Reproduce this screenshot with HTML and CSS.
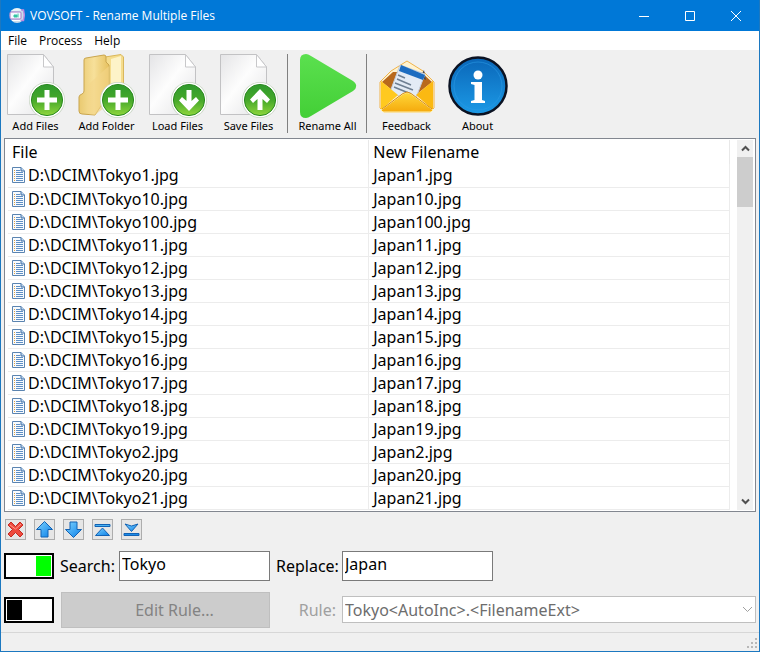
FILE: index.html
```html
<!DOCTYPE html>
<html lang="en">
<head>
  <meta charset="UTF-8" />
  <meta name="viewport" content="width=device-width, initial-scale=1.0" />
  <title>VOVSOFT - Rename Multiple Files</title>
  <link rel="stylesheet" href="styles.css">
</head>
<body>

  <!-- shared gradients and symbols -->
  <svg class="defs" width="0" height="0" aria-hidden="true">
    <defs>
      <linearGradient id="paper" x1="0" y1="0" x2="1" y2="1">
        <stop offset="0" stop-color="#e4e4e6" /><stop offset=".45" stop-color="#fdfdfd" /><stop offset="1" stop-color="#e2e2e4" />
      </linearGradient>
      <linearGradient id="green" x1="0" y1="0" x2="0" y2="1">
        <stop offset="0" stop-color="#2f9a2c" /><stop offset=".5" stop-color="#45a82a" /><stop offset="1" stop-color="#8fd63c" />
      </linearGradient>
      <linearGradient id="folder" x1="0" y1="0" x2="1" y2="0">
        <stop offset="0" stop-color="#e9c970" /><stop offset=".5" stop-color="#f7e09a" /><stop offset="1" stop-color="#e6c15f" />
      </linearGradient>
      <linearGradient id="play" x1="0" y1="0" x2="0" y2="1">
        <stop offset="0" stop-color="#5be04f" /><stop offset="1" stop-color="#43cf36" />
      </linearGradient>
      <linearGradient id="envelope" x1="0" y1="0" x2="0" y2="1">
        <stop offset="0" stop-color="#ffd83a" /><stop offset="1" stop-color="#f5a90c" />
      </linearGradient>
      <linearGradient id="info" x1="0" y1="0" x2="0" y2="1">
        <stop offset="0" stop-color="#0a66b8" /><stop offset="1" stop-color="#1c9ae6" />
      </linearGradient>
      <linearGradient id="arrow" x1="0" y1="0" x2="1" y2="1">
        <stop offset="0" stop-color="#7fd4ff" /><stop offset="1" stop-color="#0a7fe8" />
      </linearGradient>
      <symbol id="page" viewBox="0 0 63 65">
        <path d="M3.500.5H39.500L49.500 13V60.500H3.500Z" fill="url(#paper)" stroke="#c2c2c4" />
        <path d="M39.500.5V13H49.500Z" fill="#fff" stroke="#c8c8ca" />
      </symbol>
      <symbol id="badge" viewBox="0 0 63 65">
        <circle cx="43" cy="46" r="18" fill="#c9d6c4" />
        <circle cx="43" cy="46" r="17.300" fill="#fff" />
        <circle cx="43" cy="46" r="15.600" fill="url(#green)" stroke="#2c8a22" />
      </symbol>
      <symbol id="doc" viewBox="0 0 13 16">
        <path d="M.5.5H9L12.500 4V15.500H.5Z" fill="#f7fbff" stroke="#5b84b0" />
        <path d="M9 .5V4H12.500" fill="#bcd6f0" stroke="#3f6da3" />
        <path d="M4 3.500H8M4 5.500H11M4 7.500H11M4 9.500H11M4 11.500H11M4 13.500H11" stroke="#5f8fc4" />
        <path d="M2 3.500H3M2 5.500H3M2 7.500H3M2 9.500H3M2 11.500H3M2 13.500H3" stroke="#e0a040" />
      </symbol>
    </defs>
  </svg>

  <div class="window">
    <header class="titlebar">
      <svg class="app-icon" width="17" height="17" viewBox="0 0 17 17" aria-hidden="true">
        <circle cx="8" cy="8.500" r="7.500" fill="#c9dcea" />
        <path d="M2 4Q8-1 13 3.500" fill="#e9f6fa" />
        <rect x="1" y="5" width="11" height="7" rx="1" fill="#f4fbff" stroke="#a777c4" />
        <path d="M5 10V8H8V10Z M9 6.500V10.500" fill="#35c4a4" stroke="#35c4a4" />
        <path d="M12 3H14.500Q16 8 14.500 13.500H12" fill="none" stroke="#c08ae0" stroke-width="1.500" />
        <path d="M3 13.500H11" stroke="#fff" />
      </svg>
      <h1>VOVSOFT - Rename Multiple Files</h1>
      <div class="window-buttons">
        <button type="button" aria-label="Minimize"><svg width="12" height="12" viewBox="0 0 12 12"><path d="M1 6.500H11" /></svg></button>
        <button type="button" aria-label="Maximize"><svg width="12" height="12" viewBox="0 0 12 12"><path d="M1.500 1.500H10.500V10.500H1.500Z" /></svg></button>
        <button type="button" aria-label="Close"><svg width="12" height="12" viewBox="0 0 12 12"><path d="M1 1L11 11M11 1L1 11" /></svg></button>
      </div>
    </header>

    <nav class="menu">
      <a href="#file">File</a>
      <a href="#process">Process</a>
      <a href="#help">Help</a>
    </nav>

    <div class="toolbar">
      <button type="button" class="tool">
        <svg width="63" height="65" viewBox="0 0 63 65"><use href="#page" /><use href="#badge" /><path d="M40.500 36H45.500V43.500H53V48.500H45.500V56H40.500V48.500H33V43.500H40.500Z" fill="#fff" /></svg>
        <span>Add Files</span>
      </button>
      <button type="button" class="tool">
        <svg width="63" height="65" viewBox="0 0 63 65">
          <path d="M30 3L46 .5L48.500 3V44L32 57Z" fill="#f5dc8c" stroke="#d9b75c" />
          <path d="M36 5L46 2V42H36Z" fill="#fdf3c8" />
          <path d="M9 6Q9 4 11 4L29 1Q31 1 31 3V8L34 11V40L20 61L7 60Q4 60 4 57V43Q4 41 7 40Q9 39 9 37Z" fill="url(#folder)" stroke="#c9a54e" />
          <path d="M13 60V34Q13 30 16 28L34 12V50L20 61Z" fill="#f3d689" opacity=".6" />
          <use href="#badge" /><path d="M40.500 36H45.500V43.500H53V48.500H45.500V56H40.500V48.500H33V43.500H40.500Z" fill="#fff" />
        </svg>
        <span>Add Folder</span>
      </button>
      <button type="button" class="tool">
        <svg width="63" height="65" viewBox="0 0 63 65"><use href="#page" /><use href="#badge" /><path d="M40.500 36H45.500V47L50 43L53 46.500L43 57L33 46.500L36 43L40.500 47Z" fill="#fff" /></svg>
        <span>Load Files</span>
      </button>
      <button type="button" class="tool">
        <svg width="63" height="65" viewBox="0 0 63 65"><use href="#page" /><use href="#badge" /><path d="M40.500 56H45.500V45L50 49L53 45.500L43 35L33 45.500L36 49L40.500 45Z" fill="#fff" /></svg>
        <span>Save Files</span>
      </button>
      <div class="separator"></div>
      <button type="button" class="tool">
        <svg width="63" height="65" viewBox="0 0 63 65"><path d="M4 6Q4 0 10 0Q12 0 15 2L57 27Q61 30 60 33Q60 35 57 37L15 62Q12 64 10 64Q4 64 4 58Z" fill="url(#play)" /></svg>
        <span>Rename All</span>
      </button>
      <div class="separator"></div>
      <button type="button" class="tool">
        <svg width="63" height="65" viewBox="0 0 63 65">
          <path d="M5 28L16 17L32 7L48 17L59 28V54L55 58H9L5 54Z" fill="#fff3d0" stroke="#f0b34a" />
          <path d="M7 28L18 18H46L57 28L32 48Z" fill="#b8691c" />
          <path d="M45 23L49 16L51 26Z" fill="#4a4a4e" />
          <path d="M25 11L50 20L39 49L15 38Z" fill="#e3ebf5" stroke="#c3ccd8" />
          <path d="M26 11L50 21L48 26L24 17Z" fill="#1c6cc0" />
          <path d="M23 21L30 24M22 25L36 31M20 29L38 36M19 33L36 40" stroke="#6e7f92" stroke-width="1.500" />
          <path d="M6 27L23 41L6 56Z" fill="#ffc91f" />
          <path d="M58 27L41 41L58 56Z" fill="#fbb912" />
          <path d="M6 56L28 40Q32 37 36 40L58 56L56 58H8Z" fill="url(#envelope)" stroke="#fff2b0" />
          <path d="M7 55L28 39.500Q32 36.500 36 39.500L57 55" fill="none" stroke="#d68a12" />
        </svg>
        <span>Feedback</span>
      </button>
      <button type="button" class="tool">
        <svg width="63" height="65" viewBox="0 0 63 65">
          <circle cx="32" cy="32" r="28.500" fill="url(#info)" stroke="#0b1222" stroke-width="2.500" />
          <circle cx="32" cy="32" r="24" fill="none" stroke="#2a9ae4" opacity=".6" />
          <circle cx="32" cy="21" r="4.500" fill="#fff" />
          <path d="M25 28H36V46L39 47V49H25V47L28.500 46V31L25 30Z" fill="#fff" />
        </svg>
        <span>About</span>
      </button>
    </div>

    <main class="content">
      <div class="list">
        <table>
          <thead>
            <tr><th scope="col">File</th><th scope="col">New Filename</th></tr>
          </thead>
          <tbody>
            <tr><td><svg class="doc"><use href="#doc" /></svg>D:\DCIM\Tokyo1.jpg</td><td>Japan1.jpg</td></tr>
            <tr><td><svg class="doc"><use href="#doc" /></svg>D:\DCIM\Tokyo10.jpg</td><td>Japan10.jpg</td></tr>
            <tr><td><svg class="doc"><use href="#doc" /></svg>D:\DCIM\Tokyo100.jpg</td><td>Japan100.jpg</td></tr>
            <tr><td><svg class="doc"><use href="#doc" /></svg>D:\DCIM\Tokyo11.jpg</td><td>Japan11.jpg</td></tr>
            <tr><td><svg class="doc"><use href="#doc" /></svg>D:\DCIM\Tokyo12.jpg</td><td>Japan12.jpg</td></tr>
            <tr><td><svg class="doc"><use href="#doc" /></svg>D:\DCIM\Tokyo13.jpg</td><td>Japan13.jpg</td></tr>
            <tr><td><svg class="doc"><use href="#doc" /></svg>D:\DCIM\Tokyo14.jpg</td><td>Japan14.jpg</td></tr>
            <tr><td><svg class="doc"><use href="#doc" /></svg>D:\DCIM\Tokyo15.jpg</td><td>Japan15.jpg</td></tr>
            <tr><td><svg class="doc"><use href="#doc" /></svg>D:\DCIM\Tokyo16.jpg</td><td>Japan16.jpg</td></tr>
            <tr><td><svg class="doc"><use href="#doc" /></svg>D:\DCIM\Tokyo17.jpg</td><td>Japan17.jpg</td></tr>
            <tr><td><svg class="doc"><use href="#doc" /></svg>D:\DCIM\Tokyo18.jpg</td><td>Japan18.jpg</td></tr>
            <tr><td><svg class="doc"><use href="#doc" /></svg>D:\DCIM\Tokyo19.jpg</td><td>Japan19.jpg</td></tr>
            <tr><td><svg class="doc"><use href="#doc" /></svg>D:\DCIM\Tokyo2.jpg</td><td>Japan2.jpg</td></tr>
            <tr><td><svg class="doc"><use href="#doc" /></svg>D:\DCIM\Tokyo20.jpg</td><td>Japan20.jpg</td></tr>
            <tr><td><svg class="doc"><use href="#doc" /></svg>D:\DCIM\Tokyo21.jpg</td><td>Japan21.jpg</td></tr>
          </tbody>
        </table>
        <div class="scrollbar">
          <button type="button" aria-label="Scroll up"><svg width="9" height="7" viewBox="0 0 9 7"><path d="M1 5.500L4.500 2L8 5.500" /></svg></button>
          <div class="thumb"></div>
          <button type="button" aria-label="Scroll down"><svg width="9" height="7" viewBox="0 0 9 7"><path d="M1 1.500L4.500 5L8 1.500" /></svg></button>
        </div>
      </div>

      <div class="actions">
        <button type="button" aria-label="Remove"><svg width="19" height="19" viewBox="0 0 19 19"><path d="M2 5L5 2L9.500 6.500L14 2L17 5L12.500 9.500L17 14L14 17L9.500 12.500L5 17L2 14L6.500 9.500Z" fill="#ee4a3e" stroke="#c42a22" /><path d="M4 5L9.500 9L15 4" fill="none" stroke="#ff9a8c" /></svg></button>
        <button type="button" aria-label="Move up"><svg width="19" height="19" viewBox="0 0 19 19"><path d="M9.500 1.500L17.500 9.500H13V17H6V9.500H1.500Z" fill="url(#arrow)" stroke="#1262b4" /></svg></button>
        <button type="button" aria-label="Move down"><svg width="19" height="19" viewBox="0 0 19 19"><path d="M9.500 17.500L17.500 9.500H13V2H6V9.500H1.500Z" fill="url(#arrow)" stroke="#1262b4" /></svg></button>
        <button type="button" aria-label="Move to top"><svg width="19" height="19" viewBox="0 0 19 19"><path d="M2 4.500H17V6.500H2Z" fill="#4ab4f4" stroke="#1262b4" /><path d="M9.500 8L16.500 15.500H2.500Z" fill="url(#arrow)" stroke="#1262b4" /></svg></button>
        <button type="button" aria-label="Move to bottom"><svg width="19" height="19" viewBox="0 0 19 19"><path d="M2 13.500H17V15.500H2Z" fill="#1a8ae8" stroke="#1262b4" /><path d="M9.500 11.500L16 4L9.500 6L3 4Z" fill="url(#arrow)" stroke="#1262b4" /></svg></button>
      </div>

      <form class="options">
        <input type="checkbox" class="toggle" aria-label="Search and replace" checked>
        <label for="search">Search:</label>
        <input type="text" class="field" id="search" value="Tokyo">
        <label for="replace">Replace:</label>
        <input type="text" class="field" id="replace" value="Japan">

        <input type="checkbox" class="toggle second" aria-label="Use rule">
        <button type="button" class="edit-rule" disabled>Edit Rule...</button>
        <label for="rule" class="disabled">Rule:</label>
        <div class="rule">
          <select id="rule" disabled><option>Tokyo&lt;AutoInc&gt;.&lt;FilenameExt&gt;</option></select>
          <svg width="11" height="7" viewBox="0 0 11 7" aria-hidden="true"><path d="M1 1L5.500 5.500L10 1" /></svg>
        </div>
      </form>
    </main>

    <footer class="statusbar">
      <svg width="11" height="11" viewBox="0 0 11 11" aria-hidden="true"><path d="M8 1H10M4 5H6M8 5H10M0 9H2M4 9H6M8 9H10" /></svg>
    </footer>
  </div>

</body>
</html>
```

FILE: styles.css
```css
* {
  box-sizing: border-box;
}
body {
  margin: 0;
  background: #f0f0f0;
  color: #000;
  font-family: Tahoma, 'Noto Sans', sans-serif;
  font-size: 16px;
}
button {
  padding: 0;
  border: none;
  background: none;
  color: inherit;
  font: inherit;
}
svg {
  display: block;
  flex: none;
}
.window {
  display: flex;
  flex-direction: column;
  min-height: 100vh;
  border: 1px solid #1c78c0;
  border-top: none;
}

/* title bar and menu */
.titlebar {
  display: flex;
  align-items: center;
  height: 31px;
  padding-left: 8px;
  background: #0078d7;
  color: #fff;
}
.titlebar h1 {
  flex: 1;
  margin: 0 0 0 4px;
  font-family: 'Segoe UI', 'Open Sans', sans-serif;
  font-size: 12px;
  font-weight: 400;
}
.window-buttons {
  display: flex;
  height: 100%;
}
.window-buttons button {
  display: flex;
  align-items: center;
  justify-content: center;
  width: 46px;
}
.window-buttons path {
  fill: none;
  stroke: #fff;
}
.menu {
  display: flex;
  gap: 12px;
  height: 19px;
  padding-left: 7px;
  background: #fff;
  font-family: 'Segoe UI', 'Open Sans', sans-serif;
  font-size: 12px;
  line-height: 19px;
}
.menu a {
  color: #000;
  text-decoration: none;
}

/* toolbar */
.toolbar {
  display: flex;
  gap: 2px;
  padding-top: 4px;
}
.tool {
  display: flex;
  flex-direction: column;
  align-items: center;
  width: 69px;
  font-size: 11px;
  line-height: 14px;
  white-space: nowrap;
}
.separator {
  width: 1px;
  height: 79px;
  margin: 0 3px 0 2px;
  background: #808080;
}

/* file list */
.content {
  flex: 1;
  padding: 5px 3px 0;
}
.list {
  display: flex;
  gap: 1px;
  padding: 1px 2px 1px 3px;
  border: 1px solid #828790;
  background: #fff;
}
.list table {
  flex: 1;
  table-layout: fixed;
  border-collapse: collapse;
  line-height: 22px;
}
.list th {
  height: 24px;
  padding: 0 4px;
  border-right: 1px solid #e8e8e8;
  font-weight: 400;
  text-align: left;
}
.list td {
  height: 23px;
  padding: 0 4px;
  border-right: 1px solid #ececec;
  border-bottom: 1px solid #ececec;
}
.list th:first-child {
  width: 50%;
}
.doc {
  display: inline-block;
  width: 13px;
  height: 16px;
  margin-right: 3px;
  vertical-align: -2px;
}
.scrollbar {
  display: flex;
  flex-direction: column;
  width: 16px;
  margin-left: 6px;
  background: #f0f0f0;
}
.scrollbar button {
  display: flex;
  align-items: center;
  justify-content: center;
  height: 17px;
}
.scrollbar button:last-child {
  margin-top: auto;
}
.scrollbar path {
  fill: none;
  stroke: #505050;
  stroke-width: 2;
}
.thumb {
  height: 50px;
  background: #cdcdcd;
}

/* list actions */
.actions {
  display: flex;
  gap: 8px;
  padding: 7px 1px 11px;
}
.actions button {
  width: 21px;
  height: 21px;
  border: 1px solid #adadad;
  background: #e6e6e6;
}

/* search and rule options */
.options {
  display: grid;
  grid-template-columns: 50px 53px 151px 60px 151px 1fr;
  column-gap: 6px;
  row-gap: 11px;
  align-items: center;
}
.options label {
  text-align: right;
  white-space: nowrap;
}
.options .disabled {
  color: #a0a0a0;
}
.toggle {
  appearance: none;
  width: 50px;
  height: 26px;
  margin: 0;
  padding: 1px;
  border: 2px solid #000;
  background: linear-gradient(#000, #000) left / 15px 100% no-repeat content-box content-box, #fff;
}
.toggle:checked {
  background: linear-gradient(#0f0, #0f0) right / 15px 100% no-repeat content-box content-box, #fff;
}
.field {
  width: 100%;
  height: 30px;
  padding: 0 2px 4px;
  border: 1px solid #7a7a7a;
  background: #fff;
  font: inherit;
}
.second {
  grid-column: 1;
}
.edit-rule {
  grid-column: 2 / span 2;
  height: 36px;
  margin-left: 1px;
  padding-left: 18px;
  border: 1px solid #bfbfbf;
  background: #ccc;
  color: #838383;
}
.rule {
  display: grid;
  grid-column: 5 / -1;
  align-items: center;
}
.rule select,
.rule svg {
  grid-area: 1 / 1;
}
.rule svg {
  justify-self: end;
  margin-right: 3px;
}
.rule path {
  fill: none;
  stroke: #a0a0a0;
}
.rule select {
  appearance: none;
  width: 100%;
  height: 27px;
  padding: 0 2px;
  border: 1px solid #bfbfbf;
  border-radius: 0;
  background: #fff;
  color: #6d6d6d;
  font: inherit;
  opacity: 1;
}

/* status bar */
.statusbar {
  display: flex;
  align-items: flex-end;
  justify-content: flex-end;
  height: 19px;
  padding: 0 1px 2px;
  border-top: 1px solid #d7d7d7;
}
.statusbar path {
  stroke: #b8b8b8;
  stroke-width: 2;
}
```
